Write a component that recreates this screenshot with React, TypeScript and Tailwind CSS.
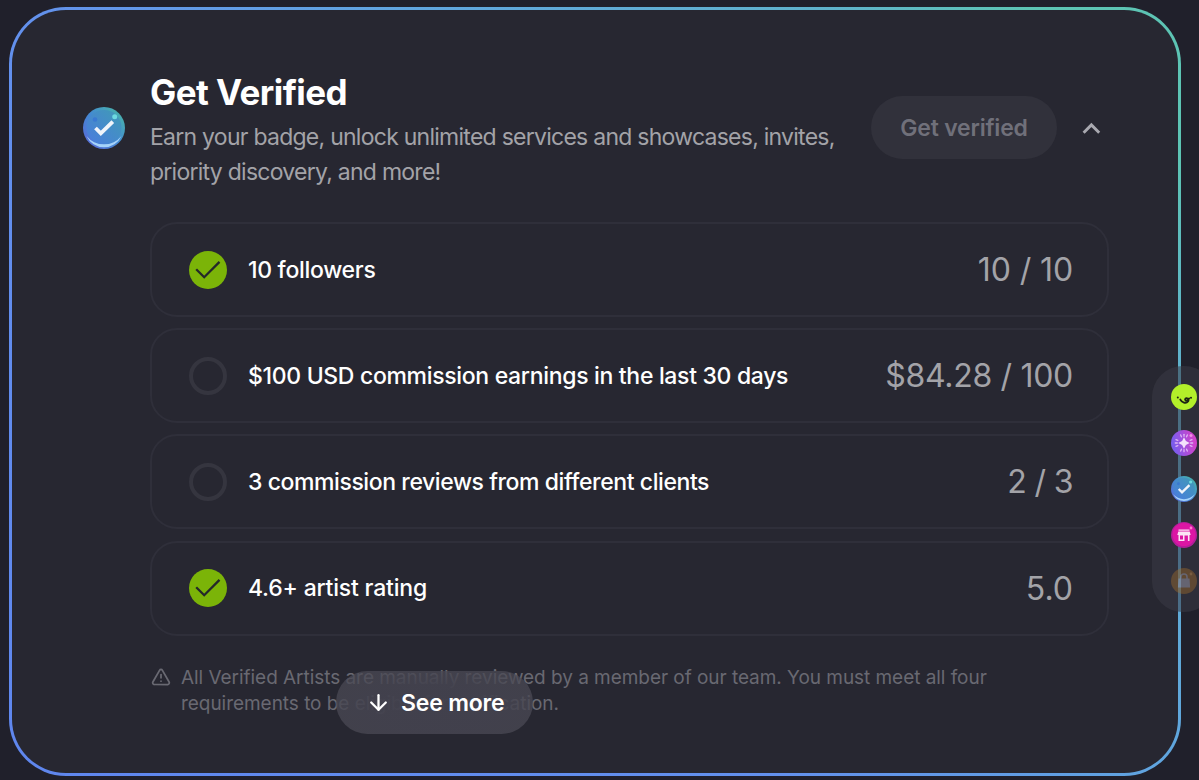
import { ArrowDown, TriangleAlert } from 'lucide-react';

interface Requirement {
  label: string;
  value: string;
  done: boolean;
  labelClass: string;
  valueClass: string;
}

const requirements: Requirement[] = [
  {
    label: '10 followers',
    value: '10 / 10',
    done: true,
    labelClass: 'tracking-[-0.3px]',
    valueClass: 'tracking-[-0.1px]',
  },
  {
    label: '$100 USD commission earnings in the last 30 days',
    value: '$84.28 / 100',
    done: false,
    labelClass: 'tracking-[-0.32px]',
    valueClass: 'tracking-[-0.3px]',
  },
  {
    label: '3 commission reviews from different clients',
    value: '2 / 3',
    done: false,
    labelClass: 'tracking-[-0.42px]',
    valueClass: 'tracking-[-0.6px]',
  },
  {
    label: '4.6+ artist rating',
    value: '5.0',
    done: true,
    labelClass: 'tracking-[-0.2px]',
    valueClass: 'tracking-normal',
  },
];

function VerifiedBadge({ id, className }: { id: string; className: string }) {
  return (
    <svg viewBox="0 0 42 42" className={className}>
      <defs>
        <linearGradient id={`${id}-bg`} x1="0" y1="1" x2="1" y2="0">
          <stop offset="0.15" stopColor="#5571d8" />
          <stop offset="0.5" stopColor="#4389d2" />
          <stop offset="0.9" stopColor="#48b3ac" />
        </linearGradient>
        <linearGradient id={`${id}-in`} x1="0" y1="1" x2="1" y2="0">
          <stop offset="0" stopColor="#4a7be0" />
          <stop offset="1" stopColor="#409bb5" />
        </linearGradient>
      </defs>
      <circle cx="21" cy="21" r="21" fill={`url(#${id}-bg)`} />
      <circle cx="21" cy="20.5" r="17.5" fill={`url(#${id}-in)`} />
      <path d="M3.500 29A19.200 19.200 0 0 0 38.500 29A22.500 22.500 0 0 1 3.500 29Z" fill="#a5d3fa" />
      <circle cx="12" cy="12.500" r="2.300" fill="#3a79d2" />
      <circle cx="31.700" cy="9.800" r="2.500" fill="#6edbe0" />
      <path d="M12.500 21l5.300 5.400L29.800 14.700" fill="none" stroke="#f0f4fa" strokeWidth="3.800" />
    </svg>
  );
}

function SmileyIcon() {
  return (
    <svg viewBox="0 0 26 26" className="size-[26px]">
      <circle cx="13" cy="13" r="13" fill="#b3f02a" />
      <circle cx="6.800" cy="13.600" r="1" fill="#1d2415" />
      <circle cx="20" cy="13.800" r="1" fill="#1d2415" />
      <path
        d="M9.300 15.600c1.500 2.900 5.700 4.400 7.700 1.900 1.500-2.400-1.300-4.300-2.600-2.800-.9 1.400.6 2.300 1.800 1.700 1-.5 1.500-1.100 1.900-2"
        fill="none"
        stroke="#1d2415"
        strokeWidth="1.900"
        strokeLinecap="round"
      />
    </svg>
  );
}

function SparkIcon() {
  const rays = [0, 22.5, 67.5, 90, 112.5, 157.5, 180, 202.5, 247.5, 270, 292.5, 337.5];
  return (
    <svg viewBox="0 0 26 26" className="size-[26px]">
      <defs>
        <linearGradient id="spark" x1="0" y1="0.6" x2="1" y2="0.4">
          <stop offset="0.1" stopColor="#7b5cec" />
          <stop offset="0.9" stopColor="#cf43cb" />
        </linearGradient>
      </defs>
      <circle cx="13" cy="13" r="13" fill="url(#spark)" />
      {rays.map((angle) => (
        <path
          key={angle}
          d="M13 4.300v2"
          stroke="#dfb6f4"
          strokeWidth="1.300"
          strokeLinecap="round"
          transform={`rotate(${angle} 13 13)`}
        />
      ))}
      <path d="M13 7.300l1.900 3.800 3.800 1.900-3.800 1.900-1.900 3.800-1.900-3.800-3.800-1.900 3.800-1.900Z" fill="#f4e0fb" />
      <circle cx="20" cy="5.600" r="1.500" fill="#ef8fe5" />
    </svg>
  );
}

function ShopIcon() {
  return (
    <svg viewBox="0 0 26 26" className="size-[26px]">
      <circle cx="13" cy="13" r="13" fill="#b31e9a" />
      <circle cx="13" cy="12.500" r="11.500" fill="#dc16a4" />
      <path
        d="M7.500 7.500h11v1.300h-11ZM7.300 9.500h11.400l1 3.600h-1.200V19h-1.600v-5.400h-3.400V19H7.500v-5.900H6.300ZM9 13.600v3.800h3v-3.800Z"
        fill="#fbe3f5"
        fillRule="evenodd"
      />
      <circle cx="20" cy="6" r="1.400" fill="#ff7bcf" />
    </svg>
  );
}

function BagIcon() {
  return (
    <svg viewBox="0 0 26 26" className="size-[26px] opacity-40">
      <circle cx="13" cy="13" r="13" fill="#a8702a" />
      <path d="M7.500 10.500h11l.6 9h-12.200Z" fill="#b9b5c6" />
      <path d="M10 11V9a3 3 0 0 1 6 0v2" fill="none" stroke="#b9b5c6" strokeWidth="1.500" />
      <circle cx="20" cy="6" r="1.400" fill="#e9a34e" />
    </svg>
  );
}

function StatusIcon({ done }: { done: boolean }) {
  if (!done) {
    return <span className="size-[38px] rounded-full border-4 border-[#35353f]" />;
  }
  return (
    <svg viewBox="0 0 38 38" className="size-[38px]">
      <circle cx="19" cy="19" r="19" fill="#7bb408" />
      <path d="M7.200 18.200l8 8L30.500 10.900" fill="none" stroke="#24282a" strokeWidth="2.300" />
    </svg>
  );
}

function RequirementRow({ item }: { item: Requirement }) {
  return (
    <li className="flex h-[95px] items-center rounded-[27px] border-2 border-[#2f2f3a] pl-[37px] pr-[34px]">
      <StatusIcon done={item.done} />
      <span className={`ml-[21px] pt-px text-[23px] font-medium text-white ${item.labelClass}`}>{item.label}</span>
      <span className={`ml-auto pt-px text-[32px] text-[#a3a3a8] ${item.valueClass}`}>{item.value}</span>
    </li>
  );
}

export default function App() {
  return (
    <div className="relative h-[780px] w-[1199px] overflow-hidden bg-[#20202b] pl-[9px] pt-[7px] font-[Inter,sans-serif] whitespace-nowrap">
      <section className="h-[769px] w-[1172px] rounded-[57px] bg-[linear-gradient(45deg,#5f86ee_0%,#6391ed_40%,#60a5df_60%,#5fb2cb_82%,#5dc4b4_92%)] p-[3px]">
        <div className="h-full rounded-[54px] bg-[#272731] pl-[71px] pt-[63px]">
          <header className="flex">
            <VerifiedBadge id="main" className="mt-[34px] size-[42px]" />
            <div className="ml-[25px] w-[721px]">
              <h2 className="-mt-px text-[35px] leading-[40px] font-bold tracking-[-0.55px] text-white">Get Verified</h2>
              <p className="mt-[8px] text-[23px] leading-[34.500px] text-[#a3a3a8]">
                <span className="block tracking-[-0.74px]">
                  Earn your badge, unlock unlimited services and showcases, invites,
                </span>
                <span className="block tracking-[-0.74px]">priority discovery, and more!</span>
              </p>
            </div>
            <button className="mt-[23px] h-[63px] w-[186px] rounded-full bg-[#31313b] pt-[2px] text-[23px] font-semibold tracking-[-0.2px] text-[#70707a]">
              Get verified
            </button>
            <button className="mt-[43px] ml-[22px] size-[24px]">
              <svg viewBox="0 0 24 24" className="size-[24px]">
                <path d="M4.600 16.700L12.400 8.900L20.200 16.700" fill="none" stroke="#a9a9b0" strokeWidth="2.900" />
              </svg>
            </button>
          </header>

          <ul className="mt-[33px] ml-[67px] flex w-[959px] flex-col gap-[11.200px]">
            {requirements.map((item) => (
              <RequirementRow key={item.label} item={item} />
            ))}
          </ul>

          <div className="mt-[29px] ml-[68px] flex text-[#696972]">
            <TriangleAlert className="mt-[2px] size-[20px]" strokeWidth={2.100} />
            <p className="ml-[10px] text-[19px] leading-[26px]">
              <span className="block tracking-[-0.045px]">
                All Verified Artists are manually reviewed by a member of our team. You must meet all four
              </span>
              <span className="block tracking-[-0.04px]">requirements to be eligible for verification.</span>
            </p>
          </div>
        </div>
      </section>

      {/* Scroll hint floating over the note */}
      <button className="absolute top-[671px] left-[336px] flex h-[63px] w-[197px] items-center rounded-full bg-[radial-gradient(ellipse_at_50%_60%,#42414df8_0%,#43424ef0_45%,#4a4954c0_75%,#4a4954b0_100%)] pl-[30px] text-white">
        <ArrowDown className="size-[25px]" strokeWidth={2.200} />
        <span className="ml-[10px] pt-[2px] text-[23px] font-semibold tracking-[-0.2px]">See more</span>
      </button>

      {/* Side dock */}
      <nav className="absolute top-[366px] left-[1152px] flex h-[246px] w-[63px] flex-col items-center gap-[20px] rounded-[31px] bg-[#3b3b468c] pt-[18px]">
        <SmileyIcon />
        <SparkIcon />
        <VerifiedBadge id="dock" className="size-[26px]" />
        <ShopIcon />
        <BagIcon />
      </nav>
    </div>
  );
}
